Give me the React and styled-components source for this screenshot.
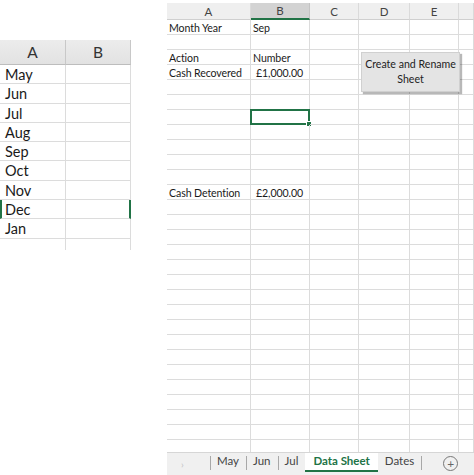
import React from "react";
import styled, { createGlobalStyle } from "styled-components";

const GREEN = "#217346";
const GRID = "#dcdcdc";

const GlobalStyle = createGlobalStyle`
  html, body {
    margin: 0;
    padding: 0;
    background: #ffffff;
    font-family: Lato, "Open Sans", "Liberation Sans", sans-serif;
    color: #222;
  }
`;

const Page = styled.div`
  display: flex;
  width: 474px;
  height: 475px;
  overflow: hidden;
  background: #fff;
`;

/* ---------- left little sheet ---------- */

const SmallSheet = styled.div`
  margin-top: 40px;
  width: 131px;
  flex-shrink: 0;
  display: grid;
  grid-template-columns: 66px 65px;
  grid-auto-rows: 19.3px;
  grid-template-rows: 25px;
  height: 210px;
  overflow: hidden;
`;

const SmallHead = styled.div`
  background: linear-gradient(#ececec, #e2e2e2);
  border-right: 1px solid #c8c8c8;
  border-bottom: 1px solid #bdbdbd;
  display: flex;
  align-items: center;
  justify-content: center;
  font-size: 15.5px;
  color: #333;
`;

const SmallCell = styled.div`
  border-right: ${(p) => (p.$selRight ? `2px solid ${GREEN}` : `1px solid ${GRID}`)};
  border-left: ${(p) => (p.$selLeft ? `2px solid ${GREEN}` : "none")};
  border-bottom: ${(p) => (p.$last ? "none" : `1px solid ${GRID}`)};
  font-size: 14.5px;
  line-height: 19px;
  padding-left: ${(p) => (p.$selLeft ? "3px" : "5px")};
  color: #1a1a1a;
  white-space: nowrap;
`;

/* ---------- right workbook ---------- */

const Workbook = styled.div`
  margin-left: 36px;
  flex: 1;
  display: flex;
  flex-direction: column;
  height: 475px;
  position: relative;
`;

const Grid = styled.div`
  flex: 1;
  display: grid;
  grid-template-columns: 84px 59px 49px 51px 49px 1fr;
  grid-template-rows: 20px;
  grid-auto-rows: 15px;
  overflow: hidden;
  position: relative;
`;

const ColHead = styled.div`
  margin-top: 3px;
  background: ${(p) => (p.$active ? "#d3d3d3" : "#efefef")};
  border-right: 1px solid ${(p) => (p.$active ? "#c4c4c4" : "#dadada")};
  border-bottom: ${(p) => (p.$active ? `2px solid ${GREEN}` : "1px solid #cfcfcf")};
  display: flex;
  align-items: center;
  justify-content: center;
  font-size: 11.5px;
  color: #444;
`;

const Cell = styled.div`
  position: relative;
  display: flex;
  justify-content: ${(p) => (p.$money ? "space-between" : "flex-start")};
  border-right: 1px solid ${GRID};
  border-bottom: 1px solid ${GRID};
  font-size: 10.6px;
  letter-spacing: -0.1px;
  line-height: 16px;
  padding: 0 ${(p) => (p.$money ? "6px" : "2px")} 0 ${(p) => (p.$money ? "5px" : "2px")};
  white-space: nowrap;
  color: #1a1a1a;
`;

const Selection = styled.div`
  position: absolute;
  left: -1px;
  top: -1px;
  right: -1px;
  bottom: -1px;
  border: 2px solid ${GREEN};

  &::after {
    content: "";
    position: absolute;
    right: -4px;
    bottom: -4px;
    width: 4px;
    height: 4px;
    background: ${GREEN};
    border: 1px solid #fff;
  }
`;

const MacroButton = styled.button`
  position: absolute;
  left: 194px;
  top: 52px;
  width: 99px;
  height: 40px;
  background: #e4e4e4;
  border: 1px solid #d0d0d0;
  box-shadow: 2px 2px 1px rgba(0, 0, 0, 0.28);
  font-family: Lato, "Open Sans", "Liberation Sans", sans-serif;
  font-size: 10.6px;
  line-height: 15px;
  color: #222;
  padding: 0;
  white-space: nowrap;
  text-align: center;
`;

const TabBar = styled.div`
  height: 22px;
  flex-shrink: 0;
  background: #f0f0f0;
  border-top: 1px solid #d6d6d6;
  display: flex;
  align-items: stretch;
  font-size: 11.5px;
  color: #444;
`;

const Arrow = styled.div`
  width: 43px;
  flex-shrink: 0;
  display: flex;
  align-items: center;
  padding-left: 14px;
  box-sizing: border-box;
  color: #c3c3c3;
  font-size: 10px;
`;

const Tab = styled.div`
  position: relative;
  flex-shrink: 0;
  display: flex;
  align-items: center;
  padding: 0 ${(p) => (p.$active ? "8px" : "7px")} 2px;
  background: ${(p) => (p.$active ? "#fff" : "transparent")};
  color: ${(p) => (p.$active ? GREEN : "#444")};
  font-weight: ${(p) => (p.$active ? 700 : 400)};
  border-bottom: 2px solid ${(p) => (p.$active ? GREEN : "transparent")};
  margin-bottom: 3px;

  &::before {
    content: "";
    display: ${(p) => (p.$noSep ? "none" : "block")};
    position: absolute;
    left: 0;
    top: 3px;
    height: 14px;
    border-left: 1px solid #a8a8a8;
  }
`;

const TabEnd = styled.div`
  border-left: 1px solid #a8a8a8;
  height: 14px;
  margin-top: 3px;
`;

const AddSheet = styled.div`
  flex-shrink: 0;
  margin-left: 21px;
  margin-top: 3px;
  width: 13px;
  height: 13px;
  border: 1px solid #777;
  border-radius: 50%;
  display: flex;
  align-items: center;
  justify-content: center;
  color: #666;
  font-size: 12px;
  line-height: 12px;
`;

const months = ["May", "Jun", "Jul", "Aug", "Sep", "Oct", "Nov", "Dec", "Jan", ""];

const cols = ["A", "B", "C", "D", "E", ""];

const data = {
  0: ["Month Year", "Sep"],
  2: ["Action", "Number"],
  3: ["Cash Recovered", ["£", "1,000.00"]],
  11: ["Cash Detention", ["£", "2,000.00"]],
};

export default function App() {
  const rows = Array.from({ length: 30 }, (_, i) => i);

  return (
    <Page>
      <GlobalStyle />
      <SmallSheet>
        <SmallHead>A</SmallHead>
        <SmallHead>B</SmallHead>
        {months.map((m, i) => (
          <React.Fragment key={i}>
            <SmallCell $selLeft={m === "Dec"} $last={m === ""}>
              {m}
            </SmallCell>
            <SmallCell $selRight={m === "Dec"} $last={m === ""} />
          </React.Fragment>
        ))}
      </SmallSheet>

      <Workbook>
        <Grid>
          {cols.map((c, i) => (
            <ColHead key={i} $active={c === "B"}>
              {c}
            </ColHead>
          ))}
          {rows.map((r) =>
            cols.map((c, ci) => {
              const row = data[r];
              const val = row && ci < 2 ? row[ci] : "";
              const money = Array.isArray(val);
              return (
                <Cell key={r + "-" + ci} $money={money}>
                  {money ? (
                    <>
                      <span>{val[0]}</span>
                      <span>{val[1]}</span>
                    </>
                  ) : (
                    val
                  )}
                  {r === 6 && ci === 1 && <Selection />}
                </Cell>
              );
            })
          )}
        </Grid>
        <MacroButton>
          Create and Rename
          <br />
          Sheet
        </MacroButton>
        <TabBar>
          <Arrow>›</Arrow>
          <Tab>May</Tab>
          <Tab>Jun</Tab>
          <Tab>Jul</Tab>
          <Tab $active $noSep>Data Sheet</Tab>
          <Tab $noSep>Dates</Tab>
          <TabEnd />
          <AddSheet>+</AddSheet>
        </TabBar>
      </Workbook>
    </Page>
  );
}
